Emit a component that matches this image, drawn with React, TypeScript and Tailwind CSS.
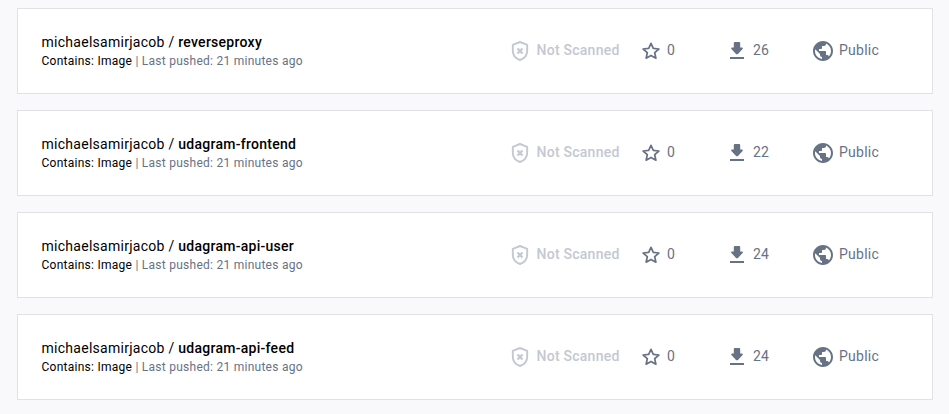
import React from "react";
import { MdPublic } from "react-icons/md";

type Repo = { name: string; stars: number; pulls: number };

const owner = "michaelsamirjacob";
const repos: Repo[] = [
  { name: "reverseproxy", stars: 0, pulls: 26 },
  { name: "udagram-frontend", stars: 0, pulls: 22 },
  { name: "udagram-api-user", stars: 0, pulls: 24 },
  { name: "udagram-api-feed", stars: 0, pulls: 24 },
];

function ShieldX() {
  return (
    <svg viewBox="0 0 20 22" className="h-[22px] w-5 shrink-0" fill="none" stroke="currentColor" strokeWidth="1.9">
      <path d="M10 2 L17.2 4.8 V10.4 C17.2 15 14.2 18.6 10 20 C5.8 18.6 2.8 15 2.8 10.4 V4.8 Z" strokeLinejoin="round" />
      <path d="M7.5 8.5 L12.5 13.5 M12.5 8.5 L7.5 13.5" strokeWidth="2.2" />
    </svg>
  );
}

function Star() {
  return (
    <svg viewBox="0 0 20 20" className="size-5 shrink-0" fill="none" stroke="currentColor" strokeWidth="1.7" strokeLinejoin="round">
      <path d="M10 2.3 L12.3 7.4 L17.9 8 L13.7 11.7 L14.9 17.2 L10 14.4 L5.1 17.2 L6.3 11.7 L2.1 8 L7.7 7.4 Z" />
    </svg>
  );
}

function Download() {
  return (
    <svg viewBox="0 0 24 24" className="size-6 shrink-0" fill="currentColor">
      <path d="M8.8 4 Q8.8 3 9.8 3 H14.2 Q15.2 3 15.2 4 V8.6 H17 Q18.5 8.8 17.6 10 L13.2 14.7 Q12 15.8 10.8 14.7 L6.4 10 Q5.5 8.8 7 8.6 H8.8 Z" />
      <path d="M5 18 H19 V20 H5 Z" />
    </svg>
  );
}

function RepoCard({ repo }: { repo: Repo }) {
  return (
    <div className="flex h-[86px] items-center border border-[#e1e2e6] bg-white pb-px pl-[23.5px]">
      <div className="w-[468.5px]">
        <div className="text-sm leading-5 tracking-[0.27px] text-black">
          {owner} / <span className="font-medium">{repo.name}</span>
        </div>
        <div className="text-xs leading-[18px] tracking-[0.26px] text-[#677285]">
          <span className="text-black">Contains: Image</span> | Last pushed: 21 minutes ago
        </div>
      </div>
      <div className="flex items-center text-sm tracking-[0.25px] text-[#677285]">
        <div className="flex w-[131px] items-center gap-[6.5px] font-medium text-[#c4c8d1]">
          <ShieldX />
          <span className="pb-0.5">Not Scanned</span>
        </div>
        <div className="flex w-[84px] items-center gap-1.5">
          <Star />
          <span className="pb-0.5">{repo.stars}</span>
        </div>
        <div className="flex w-[86px] items-center gap-1">
          <Download />
          <span className="pb-0.5">{repo.pulls}</span>
        </div>
        <div className="flex items-center gap-1">
          <MdPublic className="size-6" />
          <span className="pb-0.5">Public</span>
        </div>
      </div>
    </div>
  );
}

export default function App() {
  return (
    <main className="flex h-[414px] flex-col gap-4 overflow-hidden bg-[#f9f9fb] pt-2 pr-4 pl-[17px] font-[Roboto,sans-serif]">
      {repos.map((repo) => (
        <RepoCard key={repo.name} repo={repo} />
      ))}
    </main>
  );
}
